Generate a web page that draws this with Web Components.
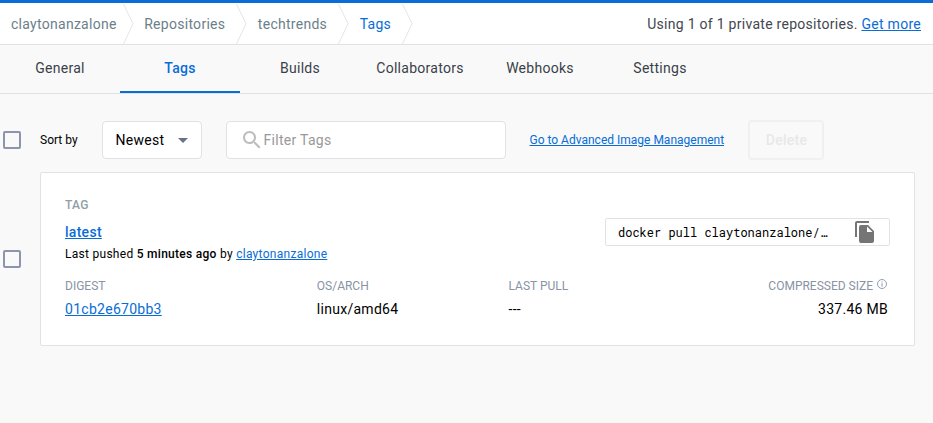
<!DOCTYPE html>
<html lang="en">
<head>
<meta charset="utf-8">
<title>Tags</title>
<style>
body { margin: 0; background: #f9f9f9; font: 14px/20px Roboto, sans-serif; letter-spacing: .28px; color: #000; }
</style>
</head>
<body>
<hub-page></hub-page>
<script>
function define(name, html) {
  const template = document.createElement('template');
  template.innerHTML = html;
  customElements.define(name, class extends HTMLElement {
    constructor() {
      super();
      this.attachShadow({ mode: 'open' }).append(template.content.cloneNode(true));
    }
  });
}

define('hub-link', `
<style>
:host { display: inline; color: #086dd7; text-decoration: underline; cursor: pointer; }
</style><slot></slot>`);

define('hub-crumb', `
<style>
:host { display: flex; align-items: center; height: 41px; color: #6b7f8a; }
:host([current]) { color: #086dd7; }
svg { display: block; width: 11px; height: 41px; margin: 0 10.5px 0 11px; fill: none; stroke: #e4e5e7; }
:host(:first-child) svg { margin-left: 6px; }
</style><slot></slot><svg viewBox="0 0 11 41"><path d="M.5 1 10 20.7.5 41"/></svg>`);

define('hub-header', `
<style>
:host { display: flex; justify-content: space-between; align-items: center; box-sizing: border-box; height: 45px;
  padding: 0 12px 0 11px; border-top: 3px solid #086dd7; border-bottom: 1px solid #e1e2e6; background: #fff; color: #434750; }
nav { display: flex; }
</style><nav><slot name="crumbs"></slot></nav><div><slot></slot></div>`);

define('hub-tab', `
<style>
:host { display: flex; box-sizing: border-box; width: 120px; height: 48px; align-items: center; justify-content: center;
  border-bottom: 2px solid transparent; color: #393f49; }
:host([selected]) { color: #086dd7; border-color: #086dd7; font-weight: 500; }
</style><slot></slot>`);

define('hub-tabs', `
<style>:host { display: flex; height: 48px; border-bottom: 1px solid #e1e2e6; }</style><slot></slot>`);

define('hub-checkbox', `
<style>
:host { display: block; box-sizing: border-box; flex: none; width: 18px; height: 18px; border: 2px solid #8c95ad; border-radius: 2px; }
</style>`);

define('hub-select', `
<style>
:host { display: flex; align-items: center; justify-content: space-between; box-sizing: border-box; width: 100px; height: 38px;
  padding: 0 13px 0 12.5px; border: 1px solid #e1e2e6; border-radius: 4px; background: #fff; }
svg { width: 10px; height: 5px; fill: #677285; }
</style><slot></slot><svg viewBox="0 0 10 5"><path d="M0 0h10L5 5z"/></svg>`);

define('hub-search', `
<style>
:host { display: flex; align-items: center; box-sizing: border-box; width: 280px; height: 38px; padding-left: 12.6px;
  border: 1px solid #e1e2e6; border-radius: 4px; background: #fff; color: #999; }
svg { width: 24px; height: 24px; fill: #bdbdbd; }
</style><svg viewBox="0 0 24 24"><path d="M15.5 14h-.79l-.28-.27C15.41 12.59 16 11.11 16 9.5 16 5.91 13.09 3 9.5 3S3 5.91 3 9.5 5.91 16 9.5 16c1.61 0 3.09-.59 4.23-1.57l.27.28v.79l5 4.99L20.49 19l-4.99-5zm-6 0C7.01 14 5 11.99 5 9.5S7.01 5 9.5 5 14 7.01 14 9.5 11.99 14 9.5 14z"/></svg><slot></slot>`);

define('hub-button', `
<style>
:host { display: flex; align-items: center; justify-content: center; box-sizing: border-box; width: 76px; height: 40px; padding-left: 1px;
  border: 2px solid #f0f0f0; border-radius: 4px; color: #e8e8e8; font-weight: 500; }
</style><slot></slot>`);

define('hub-toolbar', `
<style>
:host { display: flex; align-items: center; height: 40px; padding: 26px 0 12px 3px; }
.sort { font-size: 12px; letter-spacing: 0; width: 62px; margin-left: 19px; }
hub-search { margin: 0 23.5px 0 24px; }
.go { font-size: 12px; letter-spacing: 0; width: 218.5px; }
</style>
<hub-checkbox></hub-checkbox><span class="sort">Sort by</span><hub-select>Newest</hub-select>
<hub-search>Filter Tags</hub-search><span class="go"><hub-link>Go to Advanced Image Management</hub-link></span><hub-button>Delete</hub-button>`);

define('hub-command', `
<style>
:host { display: flex; align-items: center; justify-content: space-between; box-sizing: border-box; width: 285px; height: 28px;
  padding: 0 14px 0 12px; border: 1px solid #e1e2e6; border-radius: 2px; font: 12px/20px "Roboto Mono", "DejaVu Sans Mono", monospace; letter-spacing: 0; }
svg { width: 20px; height: 23px; fill: #757575; }
</style><slot></slot><svg viewBox="0 0 20 23"><path d="M14 0H2Q0 0 0 2v14h2V2h12zM13 4H6Q4 4 4 6v14q0 2 2 2h11q2 0 2-2V10zM12 5.5 17.5 11H12z" fill-rule="evenodd"/></svg>`);

define('hub-field', `
<style>
:host { display: block; }
.label { display: flex; font-size: 12px; line-height: 20px; letter-spacing: 0; color: #8993a5; height: 20px; margin-bottom: 3px; }
:host([end]) { text-align: right; }
:host([end]) .label { justify-content: flex-end; padding-right: 1px; }
</style><div class="label"><slot name="label"></slot></div><slot></slot>`);

define('hub-info', `
<style>
:host { display: block; width: 10px; height: 10px; margin: 3px 0 0 4px; }
svg { display: block; fill: none; stroke: #8993a5; }
</style><svg width="10" height="10"><circle cx="5" cy="5" r="4.5" stroke-width=".9"/><path d="M5 4.3v3.2M5 2.4v1" stroke-width="1"/></svg>`);

define('hub-tag-card', `
<style>
:host { display: block; box-sizing: border-box; width: 875px; height: 174px; padding: 22px 24px 0; border: 1px solid #e1e2e6; border-radius: 2px; background: #fff; }
.top { display: flex; justify-content: space-between; height: 81px; }
.caption { font-size: 12px; font-weight: 500; color: #8f9ea8; height: 27px; }
.name { font-weight: 500; height: 22px; }
.pushed { font-size: 12px; }
b { font-weight: 500; color: #000; }
hub-command { margin: 23px 0 0; }
.fields { display: grid; grid-template-columns: 251.8px 191.7px 1fr auto; padding-right: 2px; }
</style>
<div class="top">
  <div><div class="caption">TAG</div><div class="name"><hub-link>latest</hub-link></div>
  <div class="pushed">Last pushed <b>5 minutes ago</b> by <hub-link>claytonanzalone</hub-link></div></div>
  <hub-command>docker pull claytonanzalone/…</hub-command>
</div>
<div class="fields">
  <hub-field><span slot="label">DIGEST</span><hub-link>01cb2e670bb3</hub-link></hub-field>
  <hub-field><span slot="label">OS/ARCH</span>linux/amd64</hub-field>
  <hub-field><span slot="label">LAST PULL</span>---</hub-field>
  <hub-field end><span slot="label">COMPRESSED SIZE</span><hub-info slot="label"></hub-info>337.46 MB</hub-field>
</div>`);

define('hub-page', `
<style>
:host { display: block; height: 423px; overflow: hidden; }
.row { display: flex; align-items: center; padding-left: 3px; gap: 19px; }
</style>
<hub-header><hub-crumb slot="crumbs">claytonanzalone</hub-crumb><hub-crumb slot="crumbs">Repositories</hub-crumb><hub-crumb slot="crumbs">techtrends</hub-crumb><hub-crumb slot="crumbs" current>Tags</hub-crumb>Using 1 of 1 private repositories. <hub-link>Get more</hub-link></hub-header>
<hub-tabs><hub-tab>General</hub-tab><hub-tab selected>Tags</hub-tab><hub-tab>Builds</hub-tab><hub-tab>Collaborators</hub-tab><hub-tab>Webhooks</hub-tab><hub-tab>Settings</hub-tab></hub-tabs>
<hub-toolbar></hub-toolbar>
<div class="row"><hub-checkbox></hub-checkbox><hub-tag-card></hub-tag-card></div>`);
</script>
</body>
</html>
